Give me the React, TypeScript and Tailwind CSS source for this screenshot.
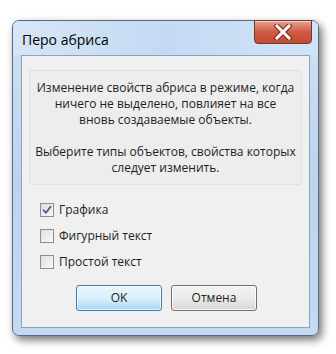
import React from "react";

function CheckRow({ checked, label }: { checked?: boolean; label: string }) {
  return (
    <div className="flex items-center h-[26px]">
      <div className="w-[14px] h-[14px] border border-[#8f8f8f] bg-gradient-to-br from-[#dcdcdc] to-[#fbfbfb] flex items-center justify-center">
        <div className="w-[10px] h-[10px] bg-gradient-to-br from-[#e2e2e2] to-[#f6f6f6] flex items-center justify-center">
          {checked && (
            <svg width="10" height="10" viewBox="0 0 10 10">
              <path d="M1.5 5.2 L4 7.8 L8.6 1.6" fill="none" stroke="#4a5f97" strokeWidth="1.8" strokeLinecap="round" strokeLinejoin="round" />
            </svg>
          )}
        </div>
      </div>
      <span className="ml-[5px] text-[12px] leading-[16px] text-[#1e1e1e] whitespace-nowrap">{label}</span>
    </div>
  );
}

export default function App() {
  return (
    <div className="w-[336px] h-[354px] bg-white overflow-hidden" style={{ fontFamily: '"Open Sans", "Noto Sans", sans-serif' }}>
      <div className="ml-[12px] mt-[20px] w-[307px] h-[316px] rounded-[7px] border border-[#5a6a7e] shadow-[3px_4px_8px_rgba(0,0,0,0.55)] bg-gradient-to-b from-[#cfe1f4] via-[#bcd4ee] to-[#c4daf2] flex flex-col relative">
        {/* title bar */}
        <div className="h-[34px] flex items-start rounded-t-[6px] bg-gradient-to-r from-[#d6e6f6] via-[#c3daf3] to-[#d2e4f7]">
          <span className="ml-[9px] mt-[10px] text-[14px] text-black leading-[18px] whitespace-nowrap">Перо абриса</span>
          <div className="ml-auto mr-[6px] -mt-[1px] w-[58px] h-[24px] rounded-b-[4px] border border-[#6e3a30] bg-gradient-to-b from-[#e9a394] via-[#cf5a42] to-[#c44a33] flex items-center justify-center shadow-[inset_0_1px_0_rgba(255,255,255,0.5)]">
            <svg width="20" height="16" viewBox="0 0 20 16">
              <path d="M4 2 L16 14 M16 2 L4 14" stroke="#7a2a1e" strokeWidth="5" strokeLinecap="square" />
              <path d="M4 2 L16 14 M16 2 L4 14" stroke="#ffffff" strokeWidth="3" strokeLinecap="square" />
            </svg>
          </div>
        </div>
        {/* client area */}
        <div className="mx-[8px] mb-[7px] flex-1 border border-[#8da2bc] bg-[#f0f0f0] flex flex-col">
          <div className="mx-[7px] mt-[14px] h-[115px] rounded-[3px] border border-[#e0e0e0] bg-[#ededed] flex flex-col items-center justify-center text-[12px] leading-[16px] text-[#1e1e1e] text-center whitespace-nowrap">
            <div>Изменение свойств абриса в режиме, когда</div>
            <div>ничего не выделено, повлияет на все</div>
            <div>вновь создаваемые объекты.</div>
            <div className="h-[16px]" />
            <div>Выберите типы объектов, свойства которых</div>
            <div>следует изменить.</div>
          </div>
          <div className="ml-[18px] mt-[12px] flex flex-col">
            <CheckRow checked label="Графика" />
            <CheckRow label="Фигурный текст" />
            <CheckRow label="Простой текст" />
          </div>
          <div className="mt-[10px] flex justify-center gap-[9px] pl-[2px]">
            <div className="w-[86px] h-[26px] rounded-[3px] border border-[#3c7fb1] bg-gradient-to-b from-[#eaf6fd] via-[#d9f0fc] to-[#a7d9f5] flex items-center justify-center text-[12px] text-[#1e1e1e] shadow-[inset_0_0_0_1px_rgba(255,255,255,0.7)]">OK</div>
            <div className="w-[86px] h-[26px] rounded-[3px] border border-[#707070] bg-gradient-to-b from-[#f2f2f2] via-[#ebebeb] to-[#d6d6d6] flex items-center justify-center text-[12px] text-[#1e1e1e] shadow-[inset_0_0_0_1px_rgba(255,255,255,0.8)]">Отмена</div>
          </div>
        </div>
      </div>
    </div>
  );
}
